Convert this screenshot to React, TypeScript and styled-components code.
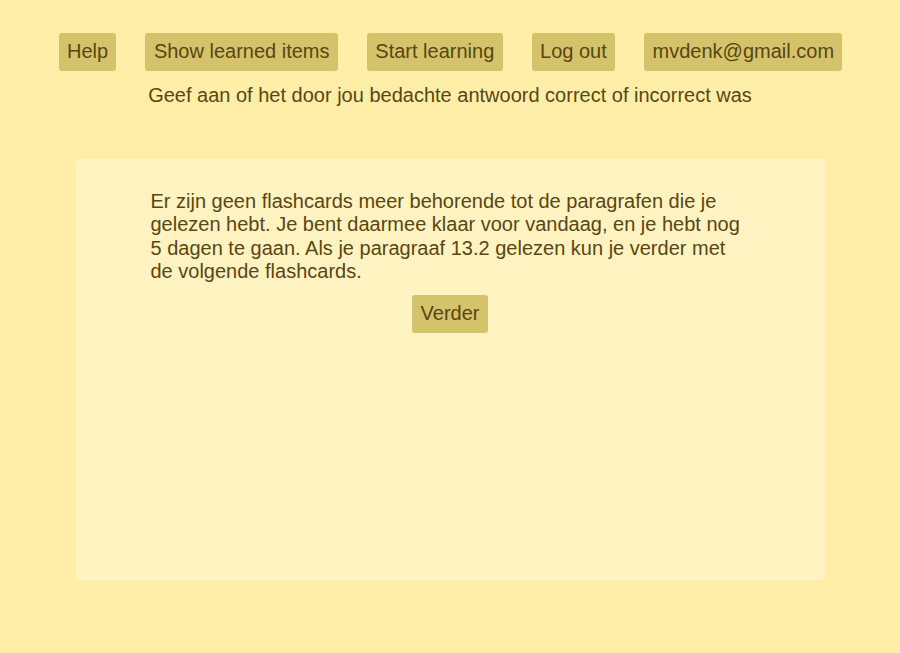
import React from 'react';
import styled, { createGlobalStyle } from 'styled-components';

/*
 * Styling
*/
const GlobalStyle = createGlobalStyle`
    html, body {
        margin: 0;
        padding: 0;
        background: #ffeea8;
    }
    body {
        font-family: "Liberation Sans", Arial, sans-serif;
        color: #5a4610;
    }
`;

const Page = styled.div`
    min-height: 653px;
    display: flex;
    flex-direction: column;
    align-items: center;
    padding-top: 33px;
    box-sizing: border-box;
`;

const Navbar = styled.nav`
    display: flex;
    justify-content: center;
    gap: 29px;
    padding-left: 1px;
`;

const Button = styled.button`
    font-family: inherit;
    font-size: 20px;
    line-height: 23px;
    color: #5a4610;
    background: #d4c36b;
    border: none;
    border-radius: 3px;
    padding: 7px 8.4px 8px;
    cursor: pointer;
`;

const Instruction = styled.p`
    margin: 13px 0 0;
    font-size: 20px;
    line-height: 23px;
`;

const Card = styled.section`
    width: 749px;
    height: 421px;
    margin-top: 52px;
    background: #fff3c2;
    border-radius: 4px;
    box-sizing: border-box;
    padding-top: 31px;
    display: flex;
    flex-direction: column;
    align-items: center;
`;

const Message = styled.p`
    width: 600px;
    margin: 0 0 0 1px;
    font-size: 20px;
    line-height: 23.3px;
`;

const ContinueButton = styled(Button)`
    margin-top: 12px;
`;

/*
 * Component
*/
const App: React.FC = () => {
    return (
        <>
            <GlobalStyle />
            <Page>
                <Navbar>
                    <Button>Help</Button>
                    <Button>Show learned items</Button>
                    <Button>Start learning</Button>
                    <Button>Log out</Button>
                    <Button>mvdenk@gmail.com</Button>
                </Navbar>
                <Instruction>
                    Geef aan of het door jou bedachte antwoord correct of incorrect was
                </Instruction>
                <Card>
                    <Message>
                        Er zijn geen flashcards meer behorende tot de paragrafen die je
                        gelezen hebt. Je bent daarmee klaar voor vandaag, en je hebt nog
                        5 dagen te gaan. Als je paragraaf 13.2 gelezen kun je verder met
                        de volgende flashcards.
                    </Message>
                    <ContinueButton>Verder</ContinueButton>
                </Card>
            </Page>
        </>
    );
};

export default App;
